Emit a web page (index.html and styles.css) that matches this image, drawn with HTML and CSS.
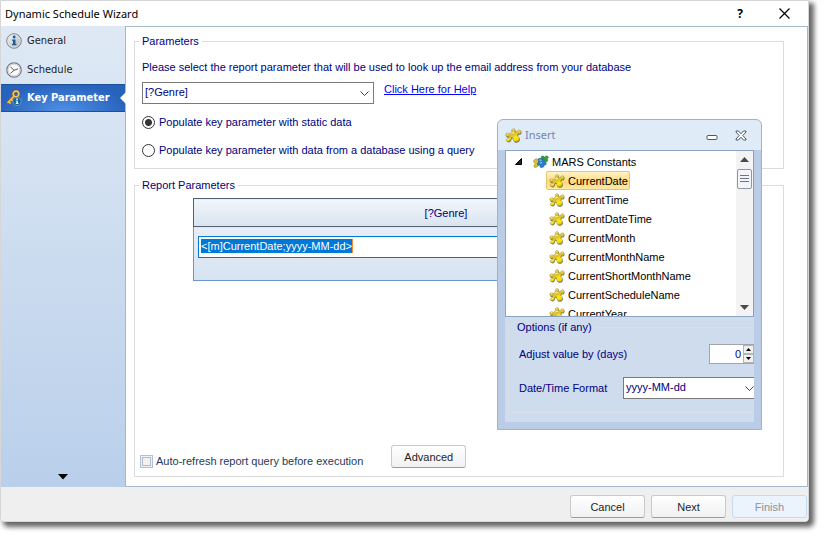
FILE: index.html
```html
<!DOCTYPE html>
<html lang="en">
<head>
<meta charset="utf-8">
<title>Dynamic Schedule Wizard</title>
<link rel="stylesheet" href="styles.css">
</head>
<body>
<svg class="sprites" aria-hidden="true">
  <defs>
    <linearGradient id="gold" x1="0" y1="0" x2=".6" y2="1">
      <stop offset="0" stop-color="#e6d36e"/><stop offset=".55" stop-color="#d8bf35"/><stop offset=".8" stop-color="#fff000"/><stop offset="1" stop-color="#e2cb10"/>
    </linearGradient>
    <linearGradient id="metal" x1="0" y1="0" x2="1" y2="1">
      <stop offset="0" stop-color="#f4f6f8"/><stop offset="1" stop-color="#aeb5bc"/>
    </linearGradient>
    <path id="piece" d="M6.500 4.700C6 4 6.100 2.600 6.900 1.900 7.800 1.100 9.300 1.500 9.500 2.600 9.600 3.300 9.300 3.900 9.200 4.400L11.300 4.600C11.600 3.400 12.700 2.400 13.900 2.800 15.300 3.300 15.400 5 14.500 5.900 13.800 6.500 12.900 6.400 12.200 6.300L11.500 8.400C12.800 8.800 13.700 10 13.400 11.500 13 13.500 10.600 14.400 8.900 13.500 7.700 12.800 7.500 11.500 7.900 10.400L6 9.600C5.600 10.800 5.600 12 4.500 12.900 3.400 13.700 1.600 13.500 1.200 12.500 1 11.600 2 11.100 2.800 10.800L4 8.700C3 9 1.600 9.300 1 8.400.3 7.200 1 5.900 2.300 5.700 3.300 5.600 3.900 5.900 4.500 6.300Z"/>
    <symbol id="puzzle" viewBox="0 0 16 16">
      <use href="#piece" x=".5" y="1" fill="#4f4d3a" opacity=".75"/>
      <use href="#piece" fill="url(#gold)" stroke="#9a852a" stroke-width=".4"/>
      <path d="M7.400 2.300l1-.3M2 6.700l1.200-.2M12.500 3.800l1.200-.1M2.300 12l1.300-.4M6 5.800l3-.4" stroke="#fff4b8" stroke-width=".8" fill="none"/>
    </symbol>
    <symbol id="group" viewBox="0 0 16 16">
      <path d="M8.500 2l2 0 .8 1.300L13 2l2 .3.3 1.700-1 .8.600 2-1.600 1.200-1.800-.6L9.500 8 8 5.500z" fill="#38a13a" stroke="#23702b" stroke-width=".5"/>
      <path d="M1 6l2.500-1.500L5 6l1.500-.5L7 8l-1.500 1-.5 3-2 1.500-2-.5 0-2 1.500-1L.5 8z" fill="#d8c33d" stroke="#877a35" stroke-width=".5"/>
      <path d="M5 5l2-1 1.500 1 1.800-.6 1.200 1.600-.7 1.200 2.200 1.300.2 2-2 .8-.7 1.700-2.500.8-1.200-1.300.5-1.700L5 11.500l-.8-1.700 1.300-1.700z" fill="#2b7fca" stroke="#1b548d" stroke-width=".5"/>
      <path d="M6.500 6l2 .3M7 9l2-.5" stroke="#a3d2f5" fill="none"/>
    </symbol>
  </defs>
</svg>

<div class="window">
  <header class="titlebar">
    <h1>Dynamic Schedule Wizard</h1>
    <button class="caption help" type="button" aria-label="Help">?</button>
    <button class="caption" type="button" aria-label="Close"><svg width="11" height="11" viewBox="0 0 11 11"><path d="M.5.5l10 10M10.500.5l-10 10" stroke="#000" stroke-width="1.200"/></svg></button>
  </header>

  <div class="body">
    <nav class="sidebar">
      <a href="#general" class="step">
        <svg width="16" height="16" viewBox="0 0 16 16"><circle cx="8" cy="8" r="7.300" fill="url(#metal)" stroke="#7d858c"/><circle cx="8" cy="8" r="6" fill="none" stroke="#dfe4e8" stroke-width=".8"/><circle cx="8.200" cy="4" r="1.400" fill="#1d5f93"/><path d="M6 6.500h3.500v4.600h1v1.200H6v-1.200h1V7.700H6z" fill="#1d5f93"/></svg>
        General</a>
      <a href="#schedule" class="step">
        <svg width="16" height="16" viewBox="0 0 16 16"><circle cx="8" cy="8" r="7.200" fill="#fafafa" stroke="#777d82" stroke-width="1.300"/><circle cx="8" cy="8" r="5.900" fill="none" stroke="#c7cbce" stroke-width=".9"/><path d="M4.500 4.800L8 8.300l4-1.500M8 8.300l-3.500 3" fill="none" stroke="#55595d"/></svg>
        Schedule</a>
      <a href="#key" class="step current">
        <svg width="16" height="16" viewBox="0 0 16 16"><circle cx="10" cy="4" r="2.800" fill="none" stroke="#7b5312" stroke-width="2.600"/><path d="M8 6.200L1.500 13M2.800 11.500l2 2M5 9.300l1.700 1.700" stroke="#7b5312" stroke-width="3" fill="none"/><circle cx="10" cy="4" r="2.800" fill="none" stroke="#f4c873" stroke-width="1.700"/><path d="M8 6.200L1.500 13M2.800 11.500l2 2M5 9.300l1.700 1.700" stroke="#eebc60" stroke-width="1.800" fill="none"/><circle cx="11" cy="11.500" r="4.200" fill="#17649b" stroke="#7baed0" stroke-width=".7"/><path d="M10.300 8.600h1.500v1.300h-1.500zM9.800 10.700h2v2.500h.8v.9H9.700v-.9h.7v-1.600h-.6z" fill="#fff"/></svg>
        Key Parameter</a>
      <button class="more" type="button" aria-label="More steps"><svg width="10" height="6" viewBox="0 0 10 6"><path d="M0 0h10L5 5.500z" fill="#000"/></svg></button>
    </nav>

    <main class="panel">
      <fieldset class="lookup">
        <legend>Parameters</legend>
        <label for="param">Please select the report parameter that will be used to look up the email address from your database</label>
        <div class="pick">
          <span class="combo">
            <select id="param"><option>[?Genre]</option></select>
            <svg width="9" height="6" viewBox="0 0 9 6"><path d="M.5.5l4 4 4-4" fill="none" stroke="#444"/></svg>
          </span>
          <a href="#help">Click Here for Help</a>
        </div>
        <label class="choice"><input type="radio" name="source" checked>Populate key parameter with static data</label>
        <label class="choice"><input type="radio" name="source">Populate key parameter with data from a database using a query</label>
      </fieldset>

      <fieldset class="report">
        <legend>Report Parameters</legend>
        <table>
          <thead><tr><th>[?Genre]</th></tr></thead>
          <tbody><tr><td><div class="edit"><input type="text" aria-label="Genre value" value="&lt;[m]CurrentDate;yyyy-MM-dd&gt;"></div></td></tr></tbody>
        </table>
        <div class="actions">
          <label class="refresh"><input type="checkbox">Auto-refresh report query before execution</label>
          <button class="btn" type="button">Advanced</button>
        </div>
      </fieldset>
    </main>
  </div>

  <footer>
    <button class="btn" type="button">Cancel</button>
    <button class="btn" type="button">Next</button>
    <button class="btn" type="button" disabled>Finish</button>
  </footer>

  <section class="insert" aria-label="Insert">
    <header>
      <svg width="17" height="17"><use href="#puzzle"/></svg>
      <h2>Insert</h2>
      <button type="button" aria-label="Minimize"><svg width="12" height="12" viewBox="0 0 12 12"><rect x="1" y="6.500" width="10" height="4" rx="1" fill="#fff" stroke="#4c5868"/></svg></button>
      <button type="button" aria-label="Close"><svg width="12" height="11" viewBox="0 0 12 11"><path d="M1 1h2.500L6 3.800 8.500 1H11v1L7.800 5.500 11 9v1H8.500L6 7.200 3.500 10H1V9l3.200-3.500L1 2z" fill="#fff" stroke="#4c5868"/></svg></button>
    </header>
    <div class="content">
      <div class="tree">
        <ul>
          <li class="root"><svg class="twist" width="7" height="7" viewBox="0 0 7 7"><path d="M6.500.5v6h-6z" fill="#222" stroke="#000"/></svg><svg width="16" height="16"><use href="#group"/></svg>MARS Constants</li>
          <li><span class="selected"><svg width="16" height="16"><use href="#puzzle"/></svg>CurrentDate</span></li>
          <li><span><svg width="16" height="16"><use href="#puzzle"/></svg>CurrentTime</span></li>
          <li><span><svg width="16" height="16"><use href="#puzzle"/></svg>CurrentDateTime</span></li>
          <li><span><svg width="16" height="16"><use href="#puzzle"/></svg>CurrentMonth</span></li>
          <li><span><svg width="16" height="16"><use href="#puzzle"/></svg>CurrentMonthName</span></li>
          <li><span><svg width="16" height="16"><use href="#puzzle"/></svg>CurrentShortMonthName</span></li>
          <li><span><svg width="16" height="16"><use href="#puzzle"/></svg>CurrentScheduleName</span></li>
          <li><span><svg width="16" height="16"><use href="#puzzle"/></svg>CurrentYear</span></li>
        </ul>
        <div class="scroll">
          <svg width="9" height="5" viewBox="0 0 9 5"><path d="M0 5h9L4.500 0z" fill="#4a4a4a"/></svg>
          <span class="thumb"></span>
          <svg class="down" width="9" height="5" viewBox="0 0 9 5"><path d="M0 0h9L4.500 5z" fill="#4a4a4a"/></svg>
        </div>
      </div>
      <fieldset class="options">
        <legend>Options (if any)</legend>
        <div class="field">
          <label for="days">Adjust value by (days)</label>
          <span class="spin"><input id="days" type="text" value="0"><span class="arrows"><button type="button" aria-label="Increase"><svg width="5" height="3" viewBox="0 0 5 3"><path d="M0 3h5L2.500 0z"/></svg></button><button type="button" aria-label="Decrease"><svg width="5" height="3" viewBox="0 0 5 3"><path d="M0 0h5L2.500 3z"/></svg></button></span></span>
        </div>
        <div class="field">
          <label for="format">Date/Time Format</label>
          <span class="combo">
            <select id="format"><option>yyyy-MM-dd</option></select>
            <svg width="9" height="6" viewBox="0 0 9 6"><path d="M.5.5l4 4 4-4" fill="none" stroke="#444"/></svg>
          </span>
        </div>
      </fieldset>
    </div>
  </section>
</div>
</body>
</html>
```
FILE: styles.css
```css
* { box-sizing: border-box; }

body {
  margin: 0;
  padding: 0 15px 15px 0;
  background: #fff;
  color: #000080;
  font: 11px/14px "Liberation Sans", Arial, sans-serif;
}

button, input, select { font: inherit; color: inherit; margin: 0; }
button { padding: 0; border: 0; background: none; }
svg { display: block; flex: none; }
.sprites { position: absolute; width: 0; height: 0; }

.window {
  position: relative;
  display: flex;
  flex-direction: column;
  min-height: calc(100vh - 15px);
  border: 1px solid #d6d6d6;
  border-radius: 0 0 4px 4px;
  background: #fff;
  box-shadow: 4px 4px 5px 1px rgba(0, 0, 0, .6);
}

.titlebar {
  display: flex;
  align-items: center;
  height: 25px;
  padding: 0 18px 0 4px;
  gap: 36px;
}
.titlebar h1 {
  flex: 1;
  margin: 0;
  color: #000;
  font: 11px/16px "Noto Sans", sans-serif;
}
.caption { color: #000; }
.caption.help { font: bold 12px/16px "Noto Sans", sans-serif; }

.body { flex: 1; display: flex; }

.sidebar {
  display: flex;
  flex-direction: column;
  width: 124px;
  background: linear-gradient(#dfe9f5, #b9cfea);
}
.step {
  display: flex;
  align-items: center;
  gap: 5px;
  height: 29px;
  padding-left: 5px;
  color: #1e1e1e;
  font: 11px/16px "DejaVu Sans Condensed", "DejaVu Sans", sans-serif;
  text-decoration: none;
}
.step.current {
  position: relative;
  height: 28px;
  border: 1px solid #1d4f9c;
  border-width: 1px 0;
  background: radial-gradient(ellipse at 50% 100%, #4f90e6, #2762bb 75%);
  color: #fff;
  font-weight: bold;
}
.step.current::after {
  content: "";
  position: absolute;
  top: 7px;
  right: -1px;
  border: 6px solid transparent;
  border-right-color: #fff;
  border-left: 0;
}
.more { margin: auto auto 7px; }

.panel {
  flex: 1;
  display: flex;
  flex-direction: column;
  gap: 9px;
  padding: 7px 23px 9px 8px;
  border: 1px solid #a5b7cd;
}
fieldset {
  min-width: 0;
  margin: 0;
  padding: 0;
  border: 1px solid #dcdcdc;
}
legend { margin-left: 4px; padding: 0 3px; }

.lookup {
  display: flex;
  flex-direction: column;
  align-items: flex-start;
  padding: 12px 7px 11px;
}
.lookup legend { margin-left: -3px; }
.pick { display: flex; gap: 10px; margin: 8px 0 11px; }
.pick a { color: #0000ff; }
.combo { position: relative; display: flex; }
.combo select {
  appearance: none;
  width: 232px;
  height: 22px;
  padding: 0 0 2px 2px;
  border: 1px solid #7a7a7a;
  border-radius: 0;
  background: #fff;
}
.combo svg { position: absolute; top: 9px; right: 5px; pointer-events: none; }
.choice { display: flex; align-items: center; gap: 4px; }
.choice + .choice { margin-top: 14px; }
.choice input {
  appearance: none;
  width: 13px;
  height: 13px;
  border: 1px solid #333;
  border-radius: 50%;
  background: #fff;
}
.choice input:checked { background: radial-gradient(#333 0 3px, #fff 4px); }

.report {
  flex: 1;
  display: flex;
  flex-direction: column;
}
.report table {
  margin: 6px 84px 0 58px;
  border-collapse: collapse;
}
.report th {
  height: 28px;
  padding: 0;
  border: 1px solid #53606f;
  background: linear-gradient(#f2f6fc, #d9e4f0);
  font-weight: normal;
}
.report td {
  height: 54px;
  padding: 9px 4px 0;
  border: 1px solid #6d96d3;
  border-top-color: #53606f;
  background: linear-gradient(#e8edf8, #d6e3f1);
  vertical-align: top;
}
.edit {
  height: 22px;
  padding: 2px;
  border: 1px solid #0078d7;
  background: #fff;
}
.edit input {
  display: block;
  field-sizing: content;
  height: 14px;
  padding: 0;
  border: 0;
  border-right: 1px solid #ff8728;
  background: #0078d7;
  color: #fff;
}
.actions {
  display: flex;
  align-items: flex-end;
  gap: 28px;
  margin-top: auto;
  padding: 0 5px 8px;
}
.refresh { display: flex; align-items: center; gap: 3px; color: #1e395b; }
.refresh input {
  appearance: none;
  width: 13px;
  height: 13px;
  border: 1px solid #abc1de;
  background: #f1f1f1;
  outline: 1px solid #b8bcc2;
  outline-offset: -3px;
}

.btn {
  width: 75px;
  height: 23px;
  border: 1px solid #c8cacc;
  border-bottom-color: #9a9c9f;
  border-radius: 3px;
  background: linear-gradient(#fff, #f0f1f3);
  color: #1e1e1e;
}
.btn:disabled { border-color: #c6daf0; background: #ebf4fd; color: #8d9299; }

footer {
  display: flex;
  justify-content: flex-end;
  gap: 6px;
  padding: 8px 1px 3px;
  border-radius: 0 0 4px 4px;
  background: #efefef;
}

.insert {
  position: absolute;
  top: 118px;
  left: 496px;
  width: 265px;
  padding: 0 7px 7px;
  border: 1px solid #a3b1c4;
  border-radius: 6px 6px 0 0;
  background: linear-gradient(#dfebf7 30px, #bbcde6 30px);
}
.insert header {
  display: flex;
  align-items: center;
  height: 30px;
  padding-right: 7px;
}
.insert h2 {
  flex: 1;
  margin: 0 0 0 3px;
  color: #7487b0;
  font: 11px/16px "Noto Sans", sans-serif;
}
.insert header button + button { margin-left: 17px; }
.content { overflow: hidden; background: #cfdcee; height: 272px; }
.tree {
  display: flex;
  height: 167px;
  overflow: hidden;
  border: 1px solid #8aa3c3;
  background: #fff;
  color: #000;
}
.tree ul { flex: 1; margin: 0; padding: 1px 0 0; list-style: none; }
.tree li { display: flex; height: 19px; padding-left: 40px; }
.tree li.root { align-items: center; gap: 3px; padding-left: 9px; }
.root .twist { margin-right: 8px; }
.tree li span {
  display: flex;
  align-items: center;
  gap: 3px;
  padding: 0 1px 0 2px;
  border: 1px solid transparent;
  border-radius: 2px;
}
.tree li .selected { border-color: #e3c56d; background: linear-gradient(#fff3c6, #ffd97c 60%, #ffe9a8); }
.scroll {
  display: flex;
  flex-direction: column;
  align-items: center;
  width: 17px;
  padding: 6px 0;
  background: #f3f3f3;
}
.thumb {
  width: 15px;
  height: 20px;
  margin-top: 7px;
  padding: 5px 2px;
  border: 1px solid #8d97a5;
  border-radius: 2px;
  background: repeating-linear-gradient(#6d7683 0 1px, #f2f4f7 1px 3px) content-box, #f2f4f7;
}
.scroll .down { margin-top: auto; }

.options {
  height: 93px;
  margin: 3px -8px 0 3px;
  padding: 9px 7px 0 10px;
  border-color: #d8dfe6;
}
.options legend { margin-left: -5px; }
.field {
  display: flex;
  justify-content: space-between;
  align-items: center;
  height: 22px;
  margin-bottom: 12px;
}
.spin {
  display: flex;
  width: 45px;
  height: 20px;
  border: 1px solid #a0a5ac;
  border-right: 0;
  background: #fff;
}
.spin input { flex: 1; min-width: 0; border: 0; padding: 0 2px; background: none; text-align: right; }
.arrows { display: flex; flex-direction: column; width: 11px; }
.arrows button { flex: 1; display: grid; place-items: center; border: 1px solid #b4b4b4; background: #f0f0f0; }
.field .combo { overflow: hidden; width: 131px; }
.field .combo select { width: 134px; flex: none; }
.field .combo svg { right: 0; }
```
